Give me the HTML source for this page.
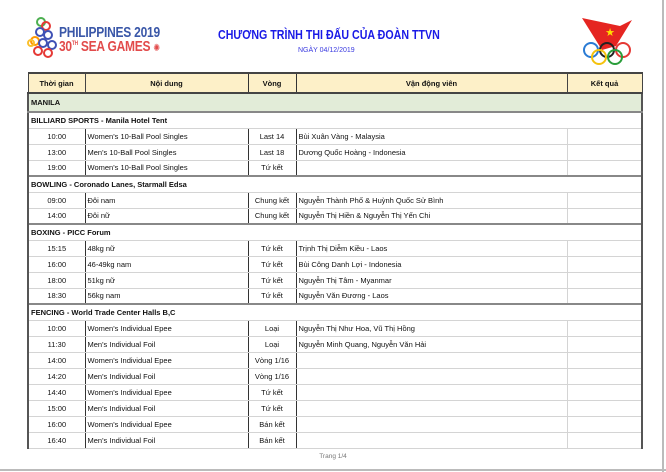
<!DOCTYPE html>
<html><head><meta charset="utf-8"><style>
*{margin:0;padding:0;box-sizing:border-box}
body{width:666px;height:472px;background:#fff;position:relative;overflow:hidden;font-family:"Liberation Sans","DejaVu Sans",sans-serif;color:#111}
.edge-r{position:absolute;left:662px;top:0;width:2px;height:472px;background:#bbb}
.edge-b{position:absolute;left:0;top:469px;width:666px;height:2px;background:#bbb}
table{position:absolute;left:27px;top:72px;width:614px;border-collapse:collapse;font-size:7.5px;table-layout:fixed}
td{height:16px;border:1px solid #d4d4d4;padding:0 2px;white-space:nowrap;overflow:hidden}
td:nth-child(1){border-left:2px solid #555}
td:last-child{border-right:2px solid #555}
tr.h td{height:20px;background:#fdf0c8;text-align:center;font-weight:bold;border:1px solid #444;border-top:2px solid #444;border-bottom:2px solid #444}
tr.m td{height:19px;background:#e2ecd8;font-weight:bold;border-bottom:2px solid #888;border-right:2px solid #555}
tr.s td{font-weight:bold;border-top:2px solid #888}
td.c{text-align:center}
td.b2{border-right:1px solid #333}
tr td:nth-child(2),tr td:nth-child(3){border-right:1px solid #333}
</style></head><body>
<div class="edge-r"></div><div class="edge-b"></div>
<svg style="position:absolute;left:26px;top:16px" width="40" height="45" viewBox="0 0 40 45">
<g fill="none" stroke-width="2">
<circle cx="15" cy="6" r="4" stroke="#4caf50"/><circle cx="20" cy="10" r="4" stroke="#e53935"/>
<circle cx="14" cy="16" r="4" stroke="#3f51b5"/><circle cx="22" cy="19" r="4" stroke="#3f51b5"/>
<circle cx="9" cy="25" r="4" stroke="#ff9800"/><circle cx="17" cy="27" r="4" stroke="#3f51b5"/>
<circle cx="26" cy="29" r="4" stroke="#3f51b5"/><circle cx="5" cy="27" r="3" stroke="#fbc02d"/>
<circle cx="12" cy="35" r="4" stroke="#e53935"/><circle cx="22" cy="37" r="4" stroke="#e53935"/>
</g></svg>
<div style="position:absolute;left:59px;top:24px;font-size:15px;font-weight:bold;color:#3a57a8;letter-spacing:-.3px;transform:scaleX(.8);transform-origin:left">PHILIPPINES 2019</div>
<div style="position:absolute;left:59px;top:38px;font-size:15px;font-weight:bold;color:#e24b4b;letter-spacing:-.3px;transform:scaleX(.8);transform-origin:left">30<sup style="font-size:6px">TH</sup> SEA GAMES <span style="font-size:10px">✺</span></div>
<div style="position:absolute;left:218px;top:27px;font-size:13px;font-weight:bold;color:#1a1ae6;white-space:nowrap;transform:scaleX(.82);transform-origin:left">CHƯƠNG TRÌNH THI ĐẤU CỦA ĐOÀN TTVN</div>
<div style="position:absolute;left:298px;top:47px;font-size:7px;color:#3a3ae0">NGÀY 04/12/2019</div>
<svg style="position:absolute;left:580px;top:16px" width="56" height="50" viewBox="0 0 56 50">
<path d="M2 2 L40 10 L52 4 L36 30 L22 34 Z" fill="#e52521"/>
<text x="30" y="20" font-size="11" fill="#ffde00" text-anchor="middle">★</text>
<g fill="none" stroke-width="2"><circle cx="11" cy="34" r="7" stroke="#2a7bd4"/><circle cx="27" cy="34" r="7" stroke="#222"/><circle cx="43" cy="34" r="7" stroke="#e53935"/><circle cx="19" cy="41" r="7" stroke="#f4c20d"/><circle cx="35" cy="41" r="7" stroke="#2a9d3a"/></g>
</svg>
<table>
<colgroup><col style="width:57px"><col style="width:163px"><col style="width:48px"><col style="width:271px"><col style="width:75px"></colgroup>
<tr class="h"><td>Thời gian</td><td>Nội dung</td><td>Vòng</td><td>Vận động viên</td><td>Kết quả</td></tr>
<tr class="m"><td colspan="5">MANILA</td></tr>
<tr class="s"><td colspan="5">BILLIARD SPORTS - Manila Hotel Tent</td></tr>
<tr><td class="c b2">10:00</td><td>Women's 10-Ball Pool Singles</td><td class="c">Last 14</td><td>Bùi Xuân Vàng - Malaysia</td><td></td></tr>
<tr><td class="c b2">13:00</td><td>Men's 10-Ball Pool Singles</td><td class="c">Last 18</td><td>Dương Quốc Hoàng - Indonesia</td><td></td></tr>
<tr><td class="c b2">19:00</td><td>Women's 10-Ball Pool Singles</td><td class="c">Tứ kết</td><td></td><td></td></tr>
<tr class="s"><td colspan="5">BOWLING - Coronado Lanes, Starmall Edsa</td></tr>
<tr><td class="c b2">09:00</td><td>Đôi nam</td><td class="c">Chung kết</td><td>Nguyễn Thành Phố &amp; Huỳnh Quốc Sử Bình</td><td></td></tr>
<tr><td class="c b2">14:00</td><td>Đôi nữ</td><td class="c">Chung kết</td><td>Nguyễn Thị Hiền &amp; Nguyễn Thị Yến Chi</td><td></td></tr>
<tr class="s"><td colspan="5">BOXING - PICC Forum</td></tr>
<tr><td class="c b2">15:15</td><td>48kg nữ</td><td class="c">Tứ kết</td><td>Trịnh Thị Diễm Kiều - Laos</td><td></td></tr>
<tr><td class="c b2">16:00</td><td>46-49kg nam</td><td class="c">Tứ kết</td><td>Bùi Công Danh Lợi - Indonesia</td><td></td></tr>
<tr><td class="c b2">18:00</td><td>51kg nữ</td><td class="c">Tứ kết</td><td>Nguyễn Thị Tâm - Myanmar</td><td></td></tr>
<tr><td class="c b2">18:30</td><td>56kg nam</td><td class="c">Tứ kết</td><td>Nguyễn Văn Đương - Laos</td><td></td></tr>
<tr class="s"><td colspan="5">FENCING - World Trade Center Halls B,C</td></tr>
<tr><td class="c b2">10:00</td><td>Women's Individual Epee</td><td class="c">Loại</td><td>Nguyễn Thị Như Hoa, Vũ Thị Hồng</td><td></td></tr>
<tr><td class="c b2">11:30</td><td>Men's Individual Foil</td><td class="c">Loại</td><td>Nguyễn Minh Quang, Nguyễn Văn Hải</td><td></td></tr>
<tr><td class="c b2">14:00</td><td>Women's Individual Epee</td><td class="c">Vòng 1/16</td><td></td><td></td></tr>
<tr><td class="c b2">14:20</td><td>Men's Individual Foil</td><td class="c">Vòng 1/16</td><td></td><td></td></tr>
<tr><td class="c b2">14:40</td><td>Women's Individual Epee</td><td class="c">Tứ kết</td><td></td><td></td></tr>
<tr><td class="c b2">15:00</td><td>Men's Individual Foil</td><td class="c">Tứ kết</td><td></td><td></td></tr>
<tr><td class="c b2">16:00</td><td>Women's Individual Epee</td><td class="c">Bán kết</td><td></td><td></td></tr>
<tr><td class="c b2">16:40</td><td>Men's Individual Foil</td><td class="c">Bán kết</td><td></td><td></td></tr>
</table>
<div style="position:absolute;left:0;width:666px;top:453px;text-align:center;font-size:6.5px;color:#777">Trang 1/4</div>
</body></html>
